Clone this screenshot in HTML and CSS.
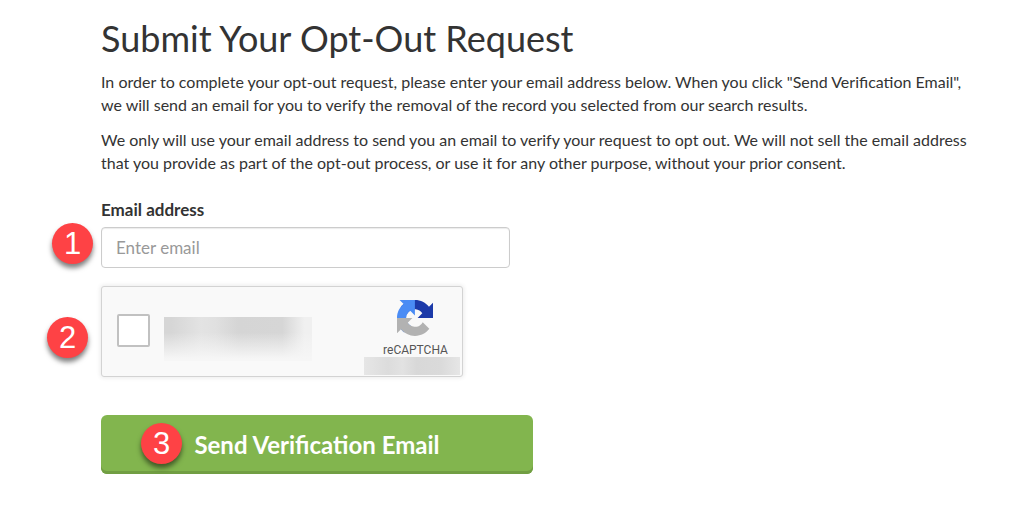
FILE: index.html
```html
<!DOCTYPE html>
<html lang="en">
<head>
    <meta charset="UTF-8">
    <meta name="viewport" content="width=device-width, initial-scale=1.0">
    <title>Submit Your Opt-Out Request</title>
    <link rel="stylesheet" href="styles.css">
</head>
<body>
    <main class="container">
        <h1>Submit Your Opt-Out Request</h1>
        <p>In order to complete your opt-out request, please enter your email address below. When you click "Send Verification Email", we will send an email for you to verify the removal of the record you selected from our search results.</p>
        <p>We only will use your email address to send you an email to verify your request to opt out. We will not sell the email address that you provide as part of the opt-out process, or use it for any other purpose, without your prior consent.</p>

        <form class="optout-form">
            <label class="email-label" for="email">Email address</label>
            <div class="field email-field">
                <span class="step step-email">1</span>
                <input class="email-input" type="email" id="email" name="email" placeholder="Enter email">
            </div>

            <div class="field captcha">
                <span class="step step-captcha">2</span>
                <input class="captcha-check" type="checkbox" id="captcha" name="captcha" aria-labelledby="captchaLabel">
                <label class="captcha-text" for="captcha"></label>
                <div class="captcha-brand">
                    <svg class="captcha-logo" viewBox="0 0 64 64" aria-hidden="true">
                        <path fill="#1c3aa9" d="M64 31.955l-.013-1.37V4.687l-7.16 7.16C50.967 4.674 42.033.093 32.033.093c-10.4 0-19.645 4.96-25.484 12.64l11.736 11.86a15.55 15.55 0 0 1 4.754-5.334c2.05-1.6 4.952-2.906 8.968-2.906.485 0 .86.057 1.135.163 4.976.393 9.288 3.14 11.828 7.124l-8.307 8.307L64 31.953"/>
                        <path fill="#4a8cf5" d="M31.862.094l-1.37.013H4.594l7.16 7.16C4.58 13.147 0 22.08 0 32.08c0 10.4 4.96 19.645 12.64 25.484L24.5 45.83a15.55 15.55 0 0 1-5.334-4.754c-1.6-2.05-2.906-4.952-2.906-8.968 0-.485.057-.86.163-1.135.393-4.976 3.14-9.288 7.124-11.828l8.307 8.307L31.86.095"/>
                        <path fill="#b2b2b2" d="M.001 32.045l.013 1.37v25.898l7.16-7.16c5.873 7.173 14.806 11.754 24.806 11.754 10.4 0 19.645-4.96 25.484-12.64l-11.736-11.86a15.55 15.55 0 0 1-4.754 5.334c-2.05 1.6-4.952 2.906-8.968 2.906-.485 0-.86-.057-1.135-.163-4.976-.393-9.288-3.14-11.828-7.124l8.307-8.307c-10.522.04-22.4.066-27.295-.005"/>
                    </svg>
                    <span class="captcha-name" id="captchaLabel">reCAPTCHA</span>
                    <span class="captcha-links"></span>
                </div>
            </div>

            <button class="send-button" type="submit"><span class="step step-send">3</span>Send Verification Email</button>
        </form>
    </main>
</body>
</html>
```

FILE: styles.css
```css
* {
    box-sizing: border-box;
}
body {
    margin: 0;
    font-family: Lato, "Liberation Sans", sans-serif;
    font-size: 17px;
    line-height: 23px;
    color: #333;
    background-color: #fff;
}
.container {
    padding: 18px 32px 30px 101px;
}
h1 {
    margin: 0 0 12px;
    font-size: 36px;
    font-weight: 400;
    line-height: 40px;
}
p {
    margin: 0 0 12px;
    font-size: 16px;
}
.optout-form {
    display: flex;
    flex-direction: column;
    align-items: flex-start;
    margin-top: 24px;
}
.field {
    position: relative;
    width: 100%;
}
.email-label {
    margin-bottom: 6px;
    font-weight: 700;
}
.email-field {
    max-width: 409px;
    margin-bottom: 18px;
}
.email-input {
    display: block;
    width: 100%;
    height: 41px;
    padding: 0 14px;
    border: 1px solid #ccc;
    border-radius: 4px;
    background-color: #fff;
    box-shadow: inset 0 1px 1px rgba(0, 0, 0, 0.08);
    color: #555;
    font-family: inherit;
    font-size: 17px;
}
.email-input::placeholder {
    color: #999;
}

/* captcha box */
.captcha {
    display: flex;
    align-items: flex-start;
    max-width: 362px;
    height: 91px;
    margin-bottom: 38px;
    padding-left: 15px;
    border: 1px solid #d3d3d3;
    border-radius: 3px;
    background-color: #f9f9f9;
    box-shadow: 0 0 4px 1px rgba(0, 0, 0, 0.08);
}
.captcha-check {
    appearance: none;
    width: 33px;
    height: 33px;
    margin: 27px 14px 0 0;
    border: 2px solid #c1c1c1;
    border-radius: 2px;
    background-color: #fff;
}
.captcha-text {
    width: 148px;
    height: 44px;
    margin-top: 30px;
    background:
        linear-gradient(to bottom, rgba(246, 246, 246, 0) 35%, #f6f6f6 95%),
        linear-gradient(to right, #d6d6d6 5%, #e3e3e3 25%, #e0e0e0 35%, #d5d5d5 50%, #d6d6d6 80%, #f0f0f0 95%);
}
.captcha-brand {
    display: flex;
    flex-direction: column;
    align-items: center;
    width: 96px;
    margin: 13px 2px 0 auto;
}
.captcha-logo {
    width: 36px;
    height: 36px;
    margin-left: 6px;
}
.captcha-name {
    margin: 7px 0 0 7px;
    color: #555;
    font-family: Roboto, "Liberation Sans", sans-serif;
    font-size: 12px;
    line-height: 14px;
}
.captcha-links {
    width: 96px;
    height: 18px;
    background: linear-gradient(to right, #e6e6e6, #dcdcdc 25%, #e2e2e2 40%, #d8d8d8 55%, #dadada 80%, #e6e6e6);
}

.send-button {
    position: relative;
    width: 100%;
    max-width: 432px;
    height: 59px;
    padding: 0;
    border: none;
    border-radius: 6px;
    background-color: #82b54e;
    box-shadow: inset 0 -3px 0 #719e43;
    color: #fff;
    font-family: inherit;
    font-size: 24px;
    font-weight: 700;
    cursor: pointer;
}

/* numbered markers */
.step {
    position: absolute;
    width: 41px;
    height: 41px;
    border-radius: 50%;
    background-color: #fe4245;
    box-shadow: 0 4px 5px rgba(0, 0, 0, 0.5);
    color: #fff;
    font-family: "Liberation Sans", Arial, sans-serif;
    font-size: 31px;
    font-weight: 400;
    line-height: 41px;
    text-align: center;
}
.step-email {
    top: -4px;
    left: -49px;
}
.step-captcha {
    top: 30px;
    left: -55px;
}
.step-send {
    top: 8px;
    left: 40px;
}
```
